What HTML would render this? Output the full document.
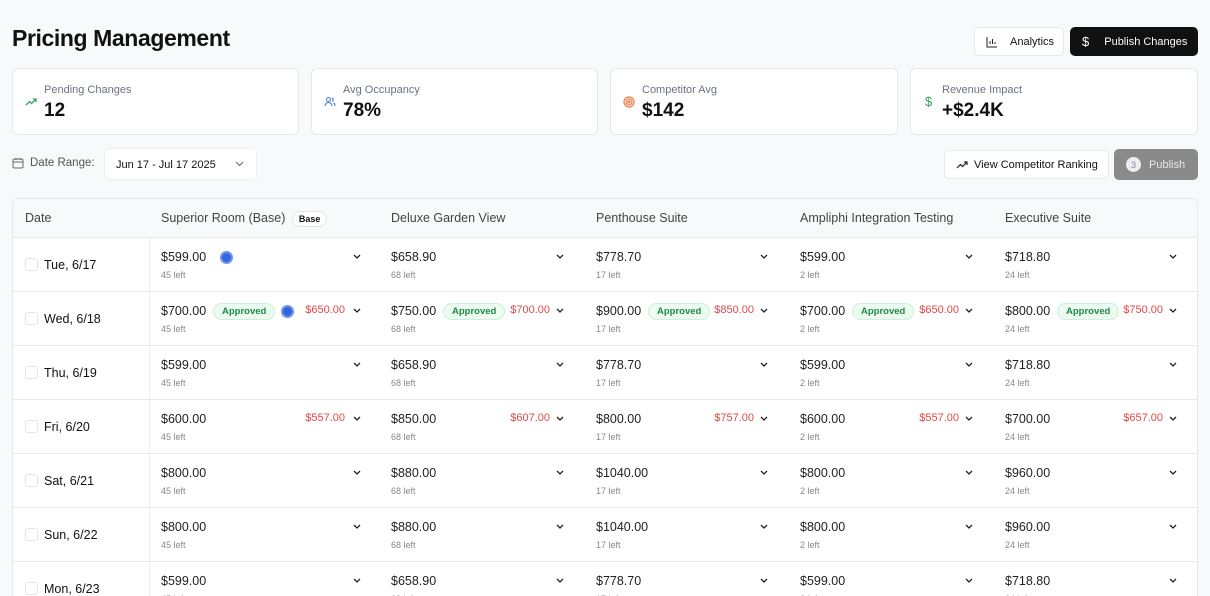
<!DOCTYPE html>
<html style="overflow:hidden"><head><meta charset="utf-8"><style>
*{box-sizing:border-box;margin:0;padding:0}
html,body{width:1210px;height:596px;overflow:hidden}
body{background:#f8f9fb;font-family:"Liberation Sans",sans-serif;color:#111;position:relative}
h1{position:absolute;left:12px;top:25px;font-size:23px;font-weight:700;letter-spacing:-0.4px}
.btn{position:absolute;border-radius:5px;font-size:11px;display:flex;align-items:center}
.card{position:absolute;top:68px;height:67px;background:#fff;border:1px solid #e6e8eb;border-radius:6px}
.card .l{position:absolute;left:31px;top:15px;font-size:11px;color:#6b7280}
.card .v{position:absolute;left:31px;top:31px;font-size:19px;font-weight:700}
.card .i{position:absolute;left:12px;top:27px}
.tbl{position:absolute;left:12px;top:198px;width:1186px;height:398px;background:#fff;border:1px solid #e6e8eb;border-bottom:none;border-radius:6px 6px 0 0;overflow:hidden}
.hd{height:39px;background:#f8f9fb;border-bottom:1px solid #e6e8eb;position:relative;font-size:12.5px;color:#444}
.hd span{position:absolute;top:12px}
.row{height:54px;border-bottom:1px solid #e6e8eb;position:relative}
.dc{position:absolute;left:0;top:0;width:137px;height:54px;border-right:1px solid #eceef0}
.cb{position:absolute;left:12px;top:20px;width:13px;height:13px;border:1px solid #e2e4e7;border-radius:3px}
.dt{position:absolute;left:31px;top:20px;font-size:12.5px}
.c{position:absolute;top:0;height:54px}
.p{position:absolute;left:11px;top:12px;font-size:12.5px;color:#222}
.lf{position:absolute;left:11px;top:32px;font-size:9px;color:#888}
.ap{position:absolute;top:11px;background:#ecfbf0;border:1px solid #cfeedb;color:#1f8a46;font-size:9.5px;font-weight:700;border-radius:9px;padding:2px 8px}
.rd{position:absolute;top:12px;font-size:11px;color:#e24848}
.ch{position:absolute;top:15px;width:10px;height:8px}
.dot{position:absolute;top:13px;width:13px;height:13px;border-radius:50%;background:#3366dd;border:2px solid #6f94ea}
</style></head><body>
<h1>Pricing Management</h1>
<div class="btn" style="left:974px;top:27px;width:90px;height:29px;background:#fff;border:1px solid #e6e8eb">
<svg style="margin-left:11px" width="12" height="12" viewBox="0 0 12 12" fill="none" stroke="#222" stroke-width="1"><path d="M1 1v10h10M4 8V5M6.5 8V3M9 8V6"/></svg><span style="margin-left:12px">Analytics</span></div>
<div class="btn" style="left:1070px;top:27px;width:128px;height:29px;background:#111;color:#fff"><span style="margin-left:12px;font-size:13px">$</span><span style="margin-left:15px">Publish Changes</span></div>

<div class="card" style="left:12px;width:287px"><svg class="i" width="12" height="12" viewBox="0 0 12 12" fill="none" stroke="#2ea35a" stroke-width="1.3"><path d="M1 9l3.5-3.5 2 2L11 3M8 3h3v3"/></svg><div class="l">Pending Changes</div><div class="v">12</div></div>
<div class="card" style="left:311px;width:287px"><svg class="i" width="12" height="12" viewBox="0 0 12 12" fill="none" stroke="#4a7ae0" stroke-width="1.1"><circle cx="4.5" cy="3.5" r="2"/><path d="M1 10c0-2 1.5-3.5 3.5-3.5S8 8 8 10M8 1.8a2 2 0 010 3.6M9.5 6.8c1 .5 1.5 1.6 1.5 3.2"/></svg><div class="l">Avg Occupancy</div><div class="v">78%</div></div>
<div class="card" style="left:610px;width:288px"><svg class="i" width="12" height="12" viewBox="0 0 12 12" fill="none" stroke="#ee7a44" stroke-width="1.2"><circle cx="6" cy="6" r="5"/><circle cx="6" cy="6" r="3"/><circle cx="6" cy="6" r="1"/></svg><div class="l">Competitor Avg</div><div class="v">$142</div></div>
<div class="card" style="left:910px;width:288px"><div class="i" style="color:#2ea35a;font-size:13px;top:25px;left:14px">$</div><div class="l">Revenue Impact</div><div class="v">+$2.4K</div></div>

<svg style="position:absolute;left:12px;top:157px" width="12" height="12" viewBox="0 0 12 12" fill="none" stroke="#666" stroke-width="1"><rect x="1" y="2" width="10" height="9" rx="1.5"/><path d="M1 5h10M4 1v2M8 1v2"/></svg>
<div style="position:absolute;left:30px;top:157px;font-size:11.5px;color:#555">Date Range:</div>
<div style="position:absolute;left:104px;top:148px;width:153px;height:32px;background:#fff;border:1px solid #eceef0;border-radius:5px;font-size:11px;padding:10px 0 0 11px">Jun 17 - Jul 17 2025<svg style="position:absolute;right:12px;top:12px" width="9" height="6" viewBox="0 0 9 6" fill="none" stroke="#666"><path d="M1 1l3.5 3.5L8 1"/></svg></div>
<div class="btn" style="left:944px;top:150px;width:165px;height:29px;background:#fff;border:1px solid #e6e8eb"><svg style="margin-left:11px" width="12" height="10" viewBox="0 0 12 10" fill="none" stroke="#222" stroke-width="1.2"><path d="M1 8l3.5-3.5 2 2L11 2M8 2h3v3"/></svg><span style="margin-left:6px">View Competitor Ranking</span></div>
<div class="btn" style="left:1114px;top:149px;width:84px;height:31px;background:#8a8a8a;color:#e8e8e8"><span style="margin-left:12px;width:15px;height:15px;border-radius:50%;background:#eee;color:#88a;font-size:9px;display:flex;align-items:center;justify-content:center">3</span><span style="margin-left:8px">Publish</span></div>

<div class="tbl">
<div class="hd"><span style="left:12px">Date</span><span style="left:148px">Superior Room (Base) <b style="display:inline-block;font-size:9px;color:#111;border:1px solid #e2e4e7;border-radius:8px;padding:2px 6px;margin-left:3px;background:#fff">Base</b></span><span style="left:378px">Deluxe Garden View</span><span style="left:583px">Penthouse Suite</span><span style="left:787px">Ampliphi Integration Testing</span><span style="left:992px">Executive Suite</span></div>
<div id="rows"></div>
</div>
<script>
var cols=[[137,230,'45 left'],[367,205,'68 left'],[572,204,'17 left'],[776,205,'2 left'],[981,204,'24 left']];
var rows=[
['Tue, 6/17',['$599.00','$658.90','$778.70','$599.00','$718.80'],0,null,1],
['Wed, 6/18',['$700.00','$750.00','$900.00','$700.00','$800.00'],1,['$650.00','$700.00','$850.00','$650.00','$750.00'],1],
['Thu, 6/19',['$599.00','$658.90','$778.70','$599.00','$718.80'],0,null,0],
['Fri, 6/20',['$600.00','$850.00','$800.00','$600.00','$700.00'],0,['$557.00','$607.00','$757.00','$557.00','$657.00'],0],
['Sat, 6/21',['$800.00','$880.00','$1040.00','$800.00','$960.00'],0,null,0],
['Sun, 6/22',['$800.00','$880.00','$1040.00','$800.00','$960.00'],0,null,0],
['Mon, 6/23',['$599.00','$658.90','$778.70','$599.00','$718.80'],0,null,0]];
var h='';
rows.forEach(function(r,ri){
h+='<div class="row"><div class="dc"><div class="cb"></div><div class="dt">'+r[0]+'</div></div>';
cols.forEach(function(c,ci){
var w=c[1];
h+='<div class="c" style="left:'+c[0]+'px;width:'+w+'px"><div class="p">'+r[1][ci]+'</div><div class="lf">'+c[2]+'</div>';
if(r[2])h+='<div class="ap" style="left:63px">Approved</div>';
if(r[3])h+='<div class="rd" style="right:35px">'+r[3][ci]+'</div>';
if(ci==0&&r[4])h+='<div class="dot" style="left:'+(ri==0?70:131)+'px"></div>';
h+='<svg class="ch" style="right:'+(ci==0?18:20)+'px" viewBox="0 0 10 8" fill="none" stroke="#222" stroke-width="1.3"><path d="M2 2l3 3 3-3"/></svg></div>';
});
h+='</div>';});
document.getElementById('rows').innerHTML=h;
</script>
</body></html>
